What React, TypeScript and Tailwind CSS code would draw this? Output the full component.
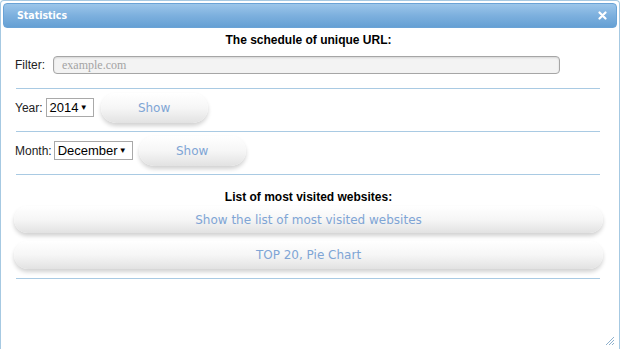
import React from 'react';

const Divider: React.FC = () => <div className="h-px bg-[#a9cae3] ml-[2px] mr-[3px]" />;

const PillButton: React.FC<{ label: string; className?: string }> = ({ label, className = '' }) => (
  <button
    type="button"
    className={`bg-gradient-to-b from-white via-[#f6f6f6] to-[#e2e2e2] shadow-[0_3px_4px_rgba(0,0,0,0.18)] text-[#7fa5d5] text-[12px] font-['DejaVu_Sans',sans-serif] ${className}`}
  >
    {label}
  </button>
);

const Select: React.FC<{ value: string; width: string }> = ({ value, width }) => (
  <div
    className={`${width} h-[19px] border border-[#a9a9a9] bg-white flex items-center justify-between pl-[3px] pr-[5px] text-[13px] text-black`}
  >
    <span>{value}</span>
    <span className="text-[8px]">▼</span>
  </div>
);

const App: React.FC = () => {
  return (
    <div className="w-[620px] h-[349px] bg-white border-l border-r border-t border-[#a6c9e2] rounded-t-[4px] font-['Liberation_Sans',Arial,sans-serif] text-[12px] text-[#222] relative overflow-hidden">
      {/* Title bar */}
      <div className="mx-[2px] mt-[2px] h-[25px] rounded-[4px] border border-[#6aa3d6] bg-gradient-to-b from-[#9cc6ea] via-[#7db0de] to-[#65a0d4] flex items-center justify-between pl-[13px] pr-[9px]">
        <span className="text-white font-bold text-[10.5px] font-['DejaVu_Sans_Condensed','DejaVu_Sans',sans-serif]">
          Statistics
        </span>
        <svg width="9" height="9" viewBox="0 0 9 9">
          <path d="M1.5 1.5 L7.5 7.5 M7.5 1.5 L1.5 7.5" stroke="white" strokeWidth="2.2" strokeLinecap="round" />
        </svg>
      </div>

      {/* Body */}
      <div className="pl-[13px] pr-[16px]">
        <div className="mt-[5px] text-center font-bold text-[12px] text-black leading-[14px]">
          The schedule of unique URL:
        </div>

        <div className="mt-[9px] flex items-center pl-[1px]">
          <span className="text-[12px] text-[#222]">Filter:</span>
          <div className="ml-[8px] w-[507px] h-[18px] rounded-[4px] border border-[#a6a6a6] bg-[#f3f3f3] shadow-[inset_0_1px_2px_rgba(0,0,0,0.12)] flex items-center pl-[8px]">
            <span className="font-['Liberation_Serif',serif] text-[12px] text-[#a3a3a3]">example.com</span>
          </div>
        </div>

        <div className="mt-[14px]">
          <Divider />
        </div>

        <div className="mt-[3px] flex items-center pl-[1px] h-[31px]">
          <span className="text-[12px]">Year:</span>
          <div className="ml-[3px]">
            <Select value="2014" width="w-[48px]" />
          </div>
          <PillButton label="Show" className="ml-[7px] w-[107px] h-[30px] rounded-full" />
        </div>

        <div className="mt-[8px]">
          <Divider />
        </div>

        <div className="mt-[3px] flex items-center pl-[1px] h-[31px]">
          <span className="text-[12px]">Month:</span>
          <div className="ml-[2px]">
            <Select value="December" width="w-[79px]" />
          </div>
          <PillButton label="Show" className="ml-[6px] w-[107px] h-[30px] rounded-full" />
        </div>

        <div className="mt-[8px]">
          <Divider />
        </div>

        <div className="mt-[15px] text-center font-bold text-[12px] text-black leading-[14px]">
          List of most visited websites:
        </div>

        <div className="mt-[2px] flex flex-col gap-[8px]">
          <PillButton label="Show the list of most visited websites" className="w-full h-[27px] rounded-[14px]" />
          <PillButton label="TOP 20, Pie Chart" className="w-full h-[28px] rounded-[14px]" />
        </div>

        <div className="mt-[9px]">
          <Divider />
        </div>
      </div>

      {/* Resize handle */}
      <svg className="absolute right-[4px] bottom-[3px]" width="10" height="10" viewBox="0 0 10 10">
        <path d="M9 1 L1 9 M9 4 L4 9 M9 7 L7 9" stroke="#8fb0cc" strokeWidth="1" />
      </svg>
    </div>
  );
};

export default App;
